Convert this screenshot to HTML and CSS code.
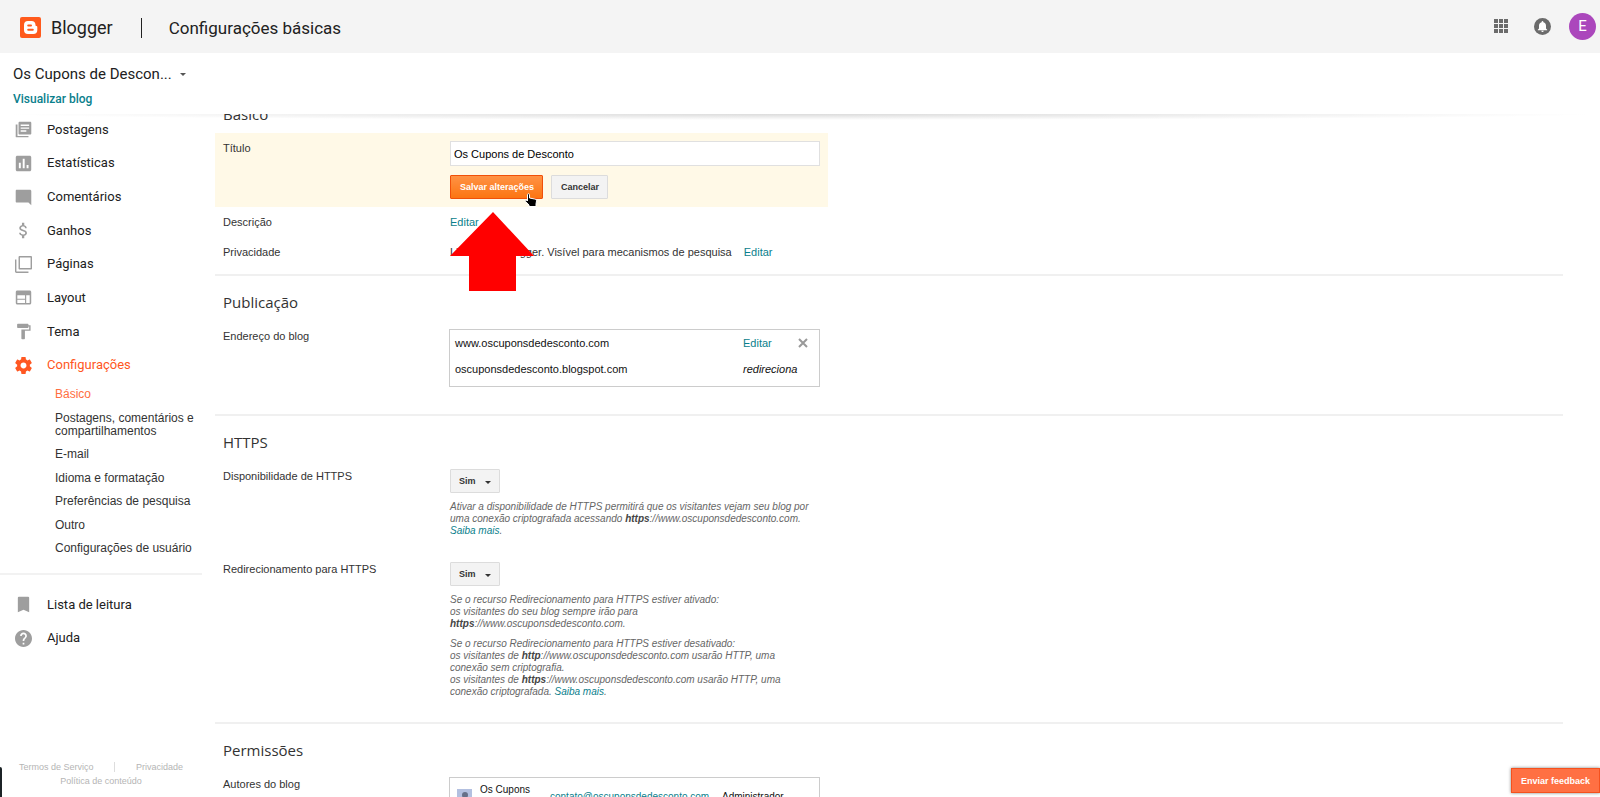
FILE: index.html
```html
<!DOCTYPE html>
<html lang="pt-BR">
<head>
    <meta charset="UTF-8">
    <meta name="viewport" content="width=device-width, initial-scale=1.0">
    <title>Blogger: Configurações básicas</title>
    <link rel="stylesheet" href="styles.css">
</head>
<body>

    <header class="topbar">
        <a class="brand" href="#">
            <svg width="21" height="21" viewBox="0 0 21 21">
                <rect width="21" height="21" rx="2" fill="#ff5a1c"/>
                <path fill="#fff" fill-rule="evenodd" d="M8 4h3.500a4 4 0 0 1 4 3.800c0 .9.200 1.200.9 1.200.6 0 .9.300.9.900V13a4 4 0 0 1-4 4H8a4 4 0 0 1-4-4V8a4 4 0 0 1 4-4zM8.200 7.400a1 1 0 0 0 0 2h2.800a1 1 0 0 0 0-2zM8.200 11.700a1 1 0 0 0 0 2h4.600a1 1 0 0 0 0-2z"/>
            </svg>
            <span>Blogger</span>
        </a>
        <h1>Configurações básicas</h1>
        <div class="account">
            <button class="icon-btn" aria-label="Google Apps">
                <svg width="14" height="14" viewBox="0 0 14 14" fill="#6b6b6b">
                    <path d="M0 0h4v4H0zM5 0h4v4H5zM10 0h4v4h-4zM0 5h4v4H0zM5 5h4v4H5zM10 5h4v4h-4zM0 10h4v4H0zM5 10h4v4H5zM10 10h4v4h-4z"/>
                </svg>
            </button>
            <button class="icon-btn" aria-label="Notificações">
                <svg width="17" height="17" viewBox="0 0 17 17">
                    <circle cx="8.500" cy="8.500" r="8.500" fill="#6b6b6b"/>
                    <path fill="#fff" d="M8.500 3c.5 0 .9.400.9.900v.3c1.700.4 2.600 1.800 2.600 3.500V10.500l1.200 1.200v.5H3.800v-.5L5 10.500V7.700c0-1.700.9-3.100 2.600-3.500v-.3c0-.5.4-.9.9-.9zM7.300 12.800h2.400a1.200 1.200 0 0 1-2.400 0z"/>
                </svg>
            </button>
            <button class="avatar">E</button>
        </div>
    </header>

    <div class="blogbar">
        <button class="blog-select">Os Cupons de Descon...<span class="caret"></span></button>
        <a href="#">Visualizar blog</a>
    </div>

    <div class="page">
        <nav class="sidebar">
            <ul class="menu menu-main">
                <li><a href="#">
                    <svg viewBox="0 0 24 24"><path d="M3.500 5H1v17.500C1 23 1.500 23 2 23h17v-2H3.500zM21.500 1h-15C5.700 1 5 1.700 5 2.500v15c0 .8.700 1.500 1.500 1.500h15c.8 0 1.500-.7 1.500-1.500v-15c0-.8-.7-1.500-1.500-1.500zM20 11H8V9h12zm-4 4H8v-2h8zm4-8H8V5h12z"/></svg>
                    Postagens</a></li>
                <li><a href="#">
                    <svg viewBox="1 1 22 22"><path d="M20 2H4c-1.100 0-2 .9-2 2v16c0 1.100.9 2 2 2h16c1.100 0 2-.9 2-2V4c0-1.100-.9-2-2-2zM8.500 18H6v-7h2.500zm5 0H11V6h2.500zm5 0H16v-4h2.500z"/></svg>
                    Estatísticas</a></li>
                <li><a href="#">
                    <svg viewBox="0 0 24 24"><path d="M23 3c0-1.100-.9-2-2-2H2.500C1.600 1 1 1.600 1 2.500v15c0 .9.600 1.500 1.500 1.500H19l4 4z"/></svg>
                    Comentários</a></li>
                <li><a href="#">
                    <svg viewBox="1 1 22 22"><path d="M11.800 10.900c-2.270-.59-3-1.200-3-2.150 0-1.090 1.010-1.850 2.700-1.850 1.780 0 2.440.85 2.500 2.100h2.210c-.07-1.720-1.120-3.300-3.210-3.810V2h-3v3.160c-1.940.42-3.500 1.680-3.500 3.610 0 2.310 1.910 3.460 4.700 4.130 2.500.6 3 1.480 3 2.410 0 .69-.49 1.790-2.700 1.790-2.060 0-2.870-.92-2.980-2.100h-2.200c.12 2.190 1.760 3.420 3.680 3.830V22h3v-3.150c1.950-.37 3.500-1.500 3.500-3.550 0-2.840-2.430-3.810-4.700-4.400z"/></svg>
                    Ganhos</a></li>
                <li><a href="#">
                    <svg viewBox="0 0 24 24"><path d="M2 5H0v17c0 1.100.9 2 2 2h17v-2H2zM22.500 0h-16C5.700 0 5 .7 5 1.500v16c0 .8.700 1.500 1.500 1.500h16c.8 0 1.500-.7 1.500-1.500v-16c0-.8-.7-1.500-1.500-1.500zM22 17H7V2h15z"/></svg>
                    Páginas</a></li>
                <li><a href="#">
                    <svg viewBox="1 1 22 22"><path d="M20 3H4c-1.100 0-2 .9-2 2v14c0 1.100.9 2 2 2h16c1.100 0 2-.9 2-2V5c0-1.100-.9-2-2-2zm-6 16H4v-4h10zm0-5.500H4V9h10zm6 5.500h-4.500V9H20z"/></svg>
                    Layout</a></li>
                <li><a href="#">
                    <svg viewBox="0 0 24 24"><path d="M19 3V2c0-.55-.45-1-1-1H4c-.55 0-1 .45-1 1v4c0 .55.45 1 1 1h14c.55 0 1-.45 1-1V5h1v4H9v13c0 .55.45 1 1 1h3c.55 0 1-.45 1-1V11h8V3z"/></svg>
                    Tema</a></li>
                <li class="active"><a href="#">
                    <svg viewBox="2 2 20 20"><path d="M19.430 12.980c.04-.32.070-.64.070-.98s-.03-.66-.07-.98l2.110-1.650c.19-.15.240-.42.120-.64l-2-3.460c-.12-.22-.39-.3-.61-.22l-2.490 1c-.52-.4-1.080-.73-1.690-.98l-.38-2.650C14.460 2.180 14.250 2 14 2h-4c-.25 0-.46.180-.49.420l-.38 2.650c-.61.250-1.170.590-1.690.980l-2.490-1c-.23-.09-.49 0-.61.220l-2 3.460c-.13.220-.07.490.12.640l2.110 1.650c-.04.320-.07.650-.07.980s.03.660.070.980l-2.110 1.650c-.19.150-.24.420-.12.640l2 3.460c.12.220.39.300.61.220l2.490-1c.52.400 1.080.730 1.690.980l.38 2.650c.03.240.24.420.49.420h4c.25 0 .46-.18.490-.42l.38-2.650c.61-.25 1.170-.59 1.690-.98l2.490 1c.23.090.49 0 .61-.22l2-3.460c.12-.22.070-.49-.12-.64zM12 15.500c-1.930 0-3.500-1.570-3.500-3.500s1.570-3.500 3.500-3.500 3.500 1.570 3.500 3.500-1.570 3.500-3.500 3.500z"/></svg>
                    Configurações</a></li>
            </ul>
            <ul class="submenu">
                <li class="active"><a href="#">Básico</a></li>
                <li><a href="#">Postagens, comentários e compartilhamentos</a></li>
                <li><a href="#">E-mail</a></li>
                <li><a href="#">Idioma e formatação</a></li>
                <li><a href="#">Preferências de pesquisa</a></li>
                <li><a href="#">Outro</a></li>
                <li><a href="#">Configurações de usuário</a></li>
            </ul>
            <ul class="menu menu-extra">
                <li><a href="#">
                    <svg viewBox="0 0 24 24"><path d="M18.500 1h-13C4.500 1 4 1.500 4 2.500V23l8-3.500 8 3.500V2.500c0-1-.5-1.500-1.500-1.500z"/></svg>
                    Lista de leitura</a></li>
                <li><a href="#">
                    <svg viewBox="2 2 20 20"><path d="M12 2C6.480 2 2 6.480 2 12s4.480 10 10 10 10-4.480 10-10S17.520 2 12 2zm1 17h-2v-2h2zm2.070-7.750l-.9.920C13.450 12.900 13 13.500 13 15h-2v-.5c0-1.100.45-2.100 1.170-2.830l1.240-1.260c.37-.36.590-.86.590-1.410 0-1.100-.9-2-2-2s-2 .9-2 2H8c0-2.210 1.790-4 4-4s4 1.790 4 4c0 .88-.36 1.680-.93 2.250z"/></svg>
                    Ajuda</a></li>
            </ul>
            <footer class="legal">
                <a href="#">Termos de Serviço</a>
                <span class="sep"></span>
                <a href="#">Privacidade</a>
                <a class="wide" href="#">Política de conteúdo</a>
            </footer>
        </nav>

        <main class="settings">
            <section class="basic">
                <h2>Básico</h2>
                <form class="row editing">
                    <label for="title">Título</label>
                    <div class="field">
                        <input type="text" id="title" value="Os Cupons de Desconto">
                        <div class="actions">
                            <button type="button" class="btn btn-primary">Salvar alterações
                                <svg class="cursor" width="12" height="14" viewBox="0 0 12 14"><path fill="#000" stroke="#fff" stroke-width="1" d="M2.500 1.500c0-1 2-1 2 0V5l5 1c1.500.3 2 1 2 2l-.5 3v2.500H4V12L.6 8.500C0 7.500 1.200 6.800 2 7.500l.5.500z"/></svg>
                            </button>
                            <button type="button" class="btn">Cancelar</button>
                        </div>
                    </div>
                </form>
                <div class="row">
                    <span>Descrição</span>
                    <div class="field pointer">
                        <a href="#">Editar</a>
                        <svg class="arrow" width="84" height="79" viewBox="0 0 84 79"><path fill="#f00" d="M43 0l41 44H66v35H19V44H0z"/></svg>
                    </div>
                </div>
                <div class="row">
                    <span>Privacidade</span>
                    <div class="field">Listado no Blogger. Visível para mecanismos de pesquisa <a class="edit" href="#">Editar</a></div>
                </div>
            </section>

            <section class="publishing">
                <h2>Publicação</h2>
                <div class="row">
                    <span>Endereço do blog</span>
                    <div class="field">
                        <table class="domains">
                            <tr>
                                <td>www.oscuponsdedesconto.com</td>
                                <td><a href="#">Editar</a></td>
                                <td><button class="remove" aria-label="Remover"><svg width="10" height="10" viewBox="0 0 10 10"><path stroke="#999" stroke-width="2" d="M1 1l8 8M9 1L1 9"/></svg></button></td>
                            </tr>
                            <tr>
                                <td>oscuponsdedesconto.blogspot.com</td>
                                <td colspan="2"><i>redireciona</i></td>
                            </tr>
                        </table>
                    </div>
                </div>
            </section>

            <section class="https">
                <h2>HTTPS</h2>
                <div class="row">
                    <label for="https">Disponibilidade de HTTPS</label>
                    <div class="field">
                        <div class="select"><select id="https"><option>Sim</option><option>Não</option></select></div>
                        <p>Ativar a disponibilidade de HTTPS permitirá que os visitantes vejam seu blog por<br>uma conexão criptografada acessando <b>https</b>://www.oscuponsdedesconto.com.<br><a href="#">Saiba mais</a>.</p>
                    </div>
                </div>
                <div class="row">
                    <label for="redirect">Redirecionamento para HTTPS</label>
                    <div class="field">
                        <div class="select"><select id="redirect"><option>Sim</option><option>Não</option></select></div>
                        <p>Se o recurso Redirecionamento para HTTPS estiver ativado:<br>os visitantes do seu blog sempre irão para<br><b>https</b>://www.oscuponsdedesconto.com.</p>
                        <p>Se o recurso Redirecionamento para HTTPS estiver desativado:<br>os visitantes de <b>http</b>://www.oscuponsdedesconto.com usarão HTTP, uma<br>conexão sem criptografia.<br>os visitantes de <b>https</b>://www.oscuponsdedesconto.com usarão HTTP, uma<br>conexão criptografada. <a href="#">Saiba mais</a>.</p>
                    </div>
                </div>
            </section>

            <section>
                <h2>Permissões</h2>
                <div class="row">
                    <span>Autores do blog</span>
                    <div class="field">
                        <table class="authors">
                            <tr>
                                <td><svg width="15" height="15" viewBox="0 0 15 15"><rect width="15" height="15" fill="#b3c0e0"/><circle cx="8" cy="6" r="3" fill="#667088"/><path fill="#667088" d="M3 15c0-8 10-8 10 0z"/></svg></td>
                                <td>Os Cupons</td>
                                <td><a href="#">contato@oscuponsdedesconto.com</a></td>
                                <td>Administrador</td>
                            </tr>
                        </table>
                    </div>
                </div>
            </section>
        </main>
    </div>

    <div class="status-edge"></div>
    <button class="feedback">Enviar feedback</button>

</body>
</html>
```

FILE: styles.css
```css
* { box-sizing: border-box; }
body { display: flex; flex-direction: column; height: 100vh; margin: 0; overflow: hidden; background: #fff; color: #333; font-family: "Liberation Sans", Arial, sans-serif; font-size: 11px; line-height: 14px; }
a { color: #0a808c; text-decoration: none; }
ul { list-style: none; margin: 0; padding: 0; }
button { font-family: inherit; cursor: pointer; }
svg { display: block; }

/* top bar */
.topbar { display: flex; align-items: center; flex: none; height: 53px; padding: 0 4px 0 20px; background: #f4f4f4; color: #212121; font-family: Roboto, sans-serif; }
.brand { display: flex; align-items: center; gap: 10px; padding-top: 2px; color: #212121; font-size: 18px; line-height: 21px; }
.topbar h1 { margin: 3px 0 0 28px; padding-left: 27px; border-left: 1px solid #212121; font-size: 17px; font-weight: 400; line-height: 20px; }
.account { display: flex; align-items: center; gap: 26px; margin-left: auto; padding-bottom: 1px; }
.icon-btn { padding: 0; border: 0; background: none; }
.avatar { width: 27px; height: 27px; margin-left: -8px; padding: 0; border: 0; border-radius: 50%; background: #ab47bc; color: #fff; font-size: 15px; }

/* blog selector */
.blogbar { position: relative; z-index: 2; flex: none; height: 61px; padding: 11px 13px; background: #fff; font-family: Roboto, sans-serif; }
.blogbar::after { content: ""; position: absolute; top: 100%; left: 0; right: 0; height: 6px; background: radial-gradient(ellipse 50% 100% at 50% 0, rgba(0, 0, 0, 0.14), rgba(0, 0, 0, 0)); }
.blog-select { display: flex; align-items: center; gap: 8px; padding: 0; border: 0; background: none; color: #212121; font-size: 15px; line-height: 20px; }
.blogbar a { display: block; margin-top: 6px; font-size: 12px; font-weight: 500; line-height: 18px; }
.caret { border: 3px solid transparent; border-top-color: #555; border-bottom: 0; }

.page { display: flex; flex: 1; min-height: 0; }

/* sidebar */
.sidebar { display: flex; flex-direction: column; flex: none; width: 202px; overflow: hidden; }
.menu { display: flex; flex-direction: column; flex: none; font-family: Roboto, sans-serif; font-size: 13px; }
.menu li { display: flex; flex: 1; align-items: center; padding-left: 15px; }
.menu a { display: flex; align-items: center; gap: 15px; color: #212121; }
.menu svg { width: 17px; height: 17px; fill: #9e9e9e; }
.menu .active a { color: #ff5722; }
.menu .active svg { fill: #ff5722; }
.menu-main { height: 269px; margin-top: -1px; }
.submenu { display: flex; flex: none; flex-direction: column; justify-content: space-between; height: 167px; margin-top: 6px; padding-left: 55px; font-size: 12px; line-height: 13px; }
.submenu a { color: #333; }
.submenu .active a { color: #ff6e40; }
.menu-extra { height: 82px; margin-top: 18px; padding-top: 13px; border-top: 2px solid #f2f2f2; }
.legal { display: grid; grid-template-columns: auto 1px auto; justify-content: space-between; margin-top: auto; padding: 0 19px 9px 19px; font-size: 9px; line-height: 14px; }
.legal a { color: #b5b5b5; }
.legal .sep { height: 10px; margin-top: 2px; background: #ddd; }
.legal .wide { grid-column: 1 / -1; text-align: center; }

/* settings */
.settings { flex: 1; margin: 0 37px 0 13px; overflow: hidden; }
.settings section { padding: 16px 0; border-bottom: 2px solid #f0f0f0; }
.settings .basic { margin-top: -10px; padding: 0 0 7px; }
.settings .publishing { padding-bottom: 19px; }
.settings h2 { margin: 0 0 9px; padding-left: 8px; font-family: "Open Sans", sans-serif; font-size: 15px; font-weight: 400; line-height: 20px; }
.row { display: grid; grid-template-columns: 227px 370px; width: 613px; margin: 0; padding: 8px; }
.editing { background: #fff9e7; }
.https .row + .row { margin-top: 9px; }
.field p { margin: 8px 0 0; color: #666; font-size: 10px; font-style: italic; line-height: 12px; white-space: nowrap; }
.field b { color: #444; }
.edit { margin-left: 9px; }
.field input { display: block; width: 100%; height: 25px; padding: 0 3px; border: 1px solid #e0e0e0; background: #fff; color: #000; font-family: inherit; font-size: 11px; }
.actions { display: flex; gap: 8px; margin-top: 9px; }
.btn { position: relative; height: 24px; padding: 0 8px 0 9px; border: 1px solid #dcdcdc; border-radius: 1px; background: #f3f3f3; color: #333; font-size: 9px; font-weight: 700; }
.btn-primary { border-color: #f0500a; background: linear-gradient(#ff9245, #fc7512); color: #fff; }
.cursor { position: absolute; right: 5px; bottom: -9px; z-index: 1; }
.pointer { position: relative; }
.arrow { position: absolute; top: -3px; left: 0; }

.domains, .authors { width: 371px; margin-left: -1px; border: 1px solid #ccc; border-collapse: separate; border-spacing: 0; color: #111; }
.domains { padding-bottom: 4px; }
.domains td { height: 26px; padding: 0; }
.domains td:first-child { width: 293px; padding-left: 5px; }
.domains td:nth-child(2) { width: 55px; }
.remove { display: block; padding: 0; border: 0; background: none; }
.authors { padding: 5px 0; font-size: 10px; line-height: 13px; }
.authors td { height: 26px; padding: 0; }
.authors td:first-child { width: 30px; padding-left: 7px; }
.authors td:nth-child(2) { width: 70px; vertical-align: top; }
.authors td:nth-child(3) { width: 172px; }

.select { position: relative; width: 50px; }
.select::after { content: ""; position: absolute; top: 12px; right: 9px; border: 3px solid transparent; border-top-color: #333; border-bottom: 0; pointer-events: none; }
.select select { display: block; width: 100%; height: 24px; padding: 0 8px; appearance: none; border: 1px solid #dcdcdc; border-radius: 1px; background: #f3f3f3; color: #333; font-family: inherit; font-size: 9px; font-weight: 700; }

/* floating bits over the page */
.status-edge { position: absolute; left: 0; bottom: 0; width: 2px; height: 30px; border-radius: 0 2px 0 0; background: #1c2326; }
.feedback { position: absolute; right: 0; bottom: 4px; z-index: 3; height: 25px; padding: 0 9px; border: 1px solid #f4511e; background: #ff7043; box-shadow: 0 0 3px rgba(0, 0, 0, 0.5); color: #fff; font-size: 9px; font-weight: 700; }
```
